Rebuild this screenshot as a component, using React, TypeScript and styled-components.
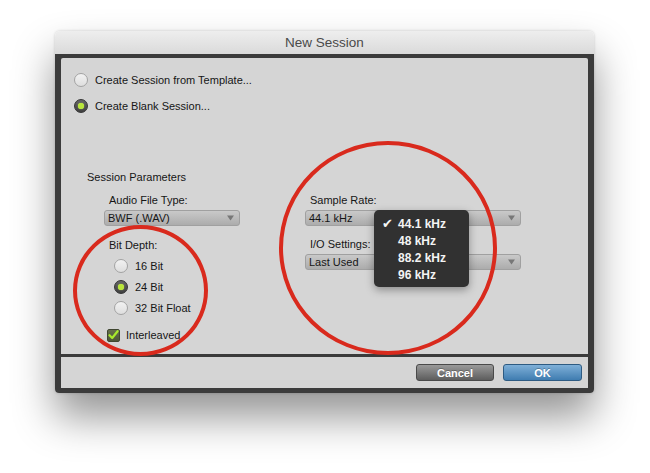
import styled, { createGlobalStyle } from "styled-components";

const GlobalStyle = createGlobalStyle`
    html, body {
        margin: 0;
        padding: 0;
        background: #ffffff;
    }
    body {
        font-family: "Liberation Sans", Arial, sans-serif;
        color: #161616;
    }
`;

const Page = styled.div`
    width: 650px;
    height: 473px;
    box-sizing: border-box;
    padding: 31px 0 0 55px;
    overflow: hidden;
`;

const Window = styled.div`
    position: relative;
    width: 539px;
    border-radius: 5px 5px 4px 4px;
    box-shadow: 0 24px 42px rgba(0, 0, 0, 0.42), 0 0 3px rgba(0, 0, 0, 0.18);
`;

const TitleBar = styled.div`
    height: 23px;
    display: flex;
    align-items: center;
    justify-content: center;
    background: linear-gradient(#eeeeee, #dadada);
    border-radius: 5px 5px 0 0;
    font-size: 13.5px;
    color: #4a4a4a;
`;

const Frame = styled.div`
    display: flex;
    flex-direction: column;
    gap: 3px;
    padding: 4px 6px 5px;
    background: #3b3b3b;
    border-radius: 0 0 4px 4px;
`;

const Panel = styled.div`
    height: 296px;
    box-sizing: border-box;
    padding: 15px 0 0 13px;
    background: #d5d5d5;
    border-radius: 2px 2px 0 0;
`;

const ModeList = styled.div`
    display: flex;
    flex-direction: column;
    gap: 12px;
`;

const OptionRow = styled.label<{ $indent?: number }>`
    display: flex;
    align-items: center;
    gap: 7px;
    height: 14px;
    padding-left: ${({ $indent }) => $indent ?? 0}px;
    font-size: 11px;
`;

const Radio = styled.span<{ $checked?: boolean }>`
    width: 14px;
    height: 14px;
    box-sizing: border-box;
    border-radius: 50%;
    display: flex;
    align-items: center;
    justify-content: center;
    flex-shrink: 0;
    border: 1px solid ${({ $checked }) => ($checked ? "#333333" : "#a3a3a3")};
    background: ${({ $checked }) =>
        $checked ? "linear-gradient(#666666, #404040)" : "linear-gradient(#f2f2f2, #dedede)"};

    &::after {
        content: "";
        display: ${({ $checked }) => ($checked ? "block" : "none")};
        width: 6px;
        height: 6px;
        border-radius: 50%;
        background: #b9e63a;
        box-shadow: 0 0 1px #d8ff6a;
    }
`;

const Params = styled.div`
    margin-top: 57px;
    padding-left: 13px;
`;

const SectionTitle = styled.div`
    font-size: 11px;
    line-height: 14px;
`;

const Columns = styled.div`
    display: grid;
    grid-template-columns: 136px 216px;
    column-gap: 65px;
    margin: 9px 0 0 17px;
`;

const Column = styled.div`
    display: flex;
    flex-direction: column;
`;

const FieldLabel = styled.div<{ $gap?: number }>`
    font-size: 11px;
    line-height: 14px;
    padding-left: 5px;
    margin-top: ${({ $gap }) => $gap ?? 0}px;
    margin-bottom: 3px;
`;

const SelectWrap = styled.div`
    position: relative;
`;

const Select = styled.div`
    height: 16px;
    box-sizing: border-box;
    display: flex;
    align-items: center;
    justify-content: space-between;
    padding: 0 5px 0 3px;
    border-radius: 3px;
    border: 1px solid #a0a0a0;
    background: linear-gradient(#c9c9c9, #acacac);
    font-size: 11px;
    color: #161616;
`;

const Arrow = () => (
    <svg width="7" height="6" viewBox="0 0 7 6">
        <path d="M0 0.5 L7 0.5 L3.5 5.5 Z" fill="#777777" />
    </svg>
);

const BitList = styled.div`
    display: flex;
    flex-direction: column;
    gap: 7px;
    margin-top: 4px;
`;

const CheckRow = styled(OptionRow)`
    margin-top: 13px;
    gap: 6px;
`;

const CheckBox = styled.span`
    width: 13px;
    height: 13px;
    box-sizing: border-box;
    border-radius: 2px;
    border: 1px solid #3f4630;
    background: linear-gradient(#66704a, #4c5538);
    display: flex;
    align-items: center;
    justify-content: center;
    flex-shrink: 0;
`;

const Menu = styled.div`
    position: absolute;
    left: 69px;
    top: 0;
    width: 95px;
    height: 77px;
    box-sizing: border-box;
    padding-top: 5px;
    background: #313131;
    border-radius: 5px;
    box-shadow: 0 3px 8px rgba(0, 0, 0, 0.35);
    z-index: 2;
`;

const MenuItem = styled.div`
    display: flex;
    align-items: center;
    height: 17px;
    font-size: 12px;
    font-weight: bold;
    color: #f4f4f4;
`;

const MenuCheck = styled.span`
    width: 24px;
    padding-left: 8px;
    box-sizing: border-box;
    font-size: 13px;
    font-family: "DejaVu Sans", sans-serif;
`;

const Footer = styled.div`
    height: 31px;
    box-sizing: border-box;
    display: flex;
    justify-content: flex-end;
    align-items: flex-start;
    gap: 9px;
    padding: 7px 6px 0 0;
    background: #d5d5d5;
`;

const Button = styled.button<{ $primary?: boolean; $width: number }>`
    width: ${({ $width }) => $width}px;
    height: 17px;
    padding: 0;
    border-radius: 3px;
    border: 1px solid ${({ $primary }) => ($primary ? "#2e5b82" : "#4a4a4a")};
    background: ${({ $primary }) =>
        $primary ? "linear-gradient(#7fb0d8, #3f7cb0)" : "linear-gradient(#9a9a9a, #5d5d5d)"};
    color: #ffffff;
    font-family: "Liberation Sans", Arial, sans-serif;
    font-size: 11px;
    font-weight: bold;
    text-shadow: 0 -1px 0 rgba(0, 0, 0, 0.25);
`;

const Ring = styled.div<{ $left: number; $top: number; $w: number; $h: number }>`
    position: absolute;
    left: ${({ $left }) => $left}px;
    top: ${({ $top }) => $top}px;
    width: ${({ $w }) => $w}px;
    height: ${({ $h }) => $h}px;
    box-sizing: border-box;
    border: 4px solid #d92a1d;
    border-radius: 50%;
    pointer-events: none;
    z-index: 3;
`;

const rates = ["44.1 kHz", "48 kHz", "88.2 kHz", "96 kHz"];

export default function App() {
    return (
        <Page>
            <GlobalStyle />
            <Window>
                <TitleBar>New Session</TitleBar>
                <Frame>
                    <Panel>
                        <ModeList>
                            <OptionRow>
                                <Radio />
                                Create Session from Template...
                            </OptionRow>
                            <OptionRow>
                                <Radio $checked />
                                Create Blank Session...
                            </OptionRow>
                        </ModeList>
                        <Params>
                            <SectionTitle>Session Parameters</SectionTitle>
                            <Columns>
                                <Column>
                                    <FieldLabel>Audio File Type:</FieldLabel>
                                    <Select>
                                        BWF (.WAV)
                                        <Arrow />
                                    </Select>
                                    <FieldLabel $gap={12}>Bit Depth:</FieldLabel>
                                    <BitList>
                                        <OptionRow $indent={10}>
                                            <Radio />
                                            16 Bit
                                        </OptionRow>
                                        <OptionRow $indent={10}>
                                            <Radio $checked />
                                            24 Bit
                                        </OptionRow>
                                        <OptionRow $indent={10}>
                                            <Radio />
                                            32 Bit Float
                                        </OptionRow>
                                    </BitList>
                                    <CheckRow $indent={3}>
                                        <CheckBox>
                                            <svg width="11" height="10" viewBox="0 0 11 10">
                                                <path
                                                    d="M1.5 5.2 L4.2 8 L9.6 1.2"
                                                    fill="none"
                                                    stroke="#a8ea2c"
                                                    strokeWidth="2.2"
                                                    strokeLinecap="round"
                                                    strokeLinejoin="round"
                                                />
                                            </svg>
                                        </CheckBox>
                                        Interleaved
                                    </CheckRow>
                                </Column>
                                <Column>
                                    <FieldLabel>Sample Rate:</FieldLabel>
                                    <SelectWrap>
                                        <Select>
                                            44.1 kHz
                                            <Arrow />
                                        </Select>
                                        <Menu>
                                            {rates.map((r, i) => (
                                                <MenuItem key={r}>
                                                    <MenuCheck>{i === 0 ? "✔" : ""}</MenuCheck>
                                                    {r}
                                                </MenuItem>
                                            ))}
                                        </Menu>
                                    </SelectWrap>
                                    <FieldLabel $gap={11}>I/O Settings:</FieldLabel>
                                    <Select>
                                        Last Used
                                        <Arrow />
                                    </Select>
                                </Column>
                            </Columns>
                        </Params>
                    </Panel>
                    <Footer>
                        <Button $width={78}>Cancel</Button>
                        <Button $width={79} $primary>
                            OK
                        </Button>
                    </Footer>
                </Frame>
                <Ring $left={18} $top={194} $w={135} $h={131} />
                <Ring $left={224} $top={110} $w={218} $h={214} />
            </Window>
        </Page>
    );
}
